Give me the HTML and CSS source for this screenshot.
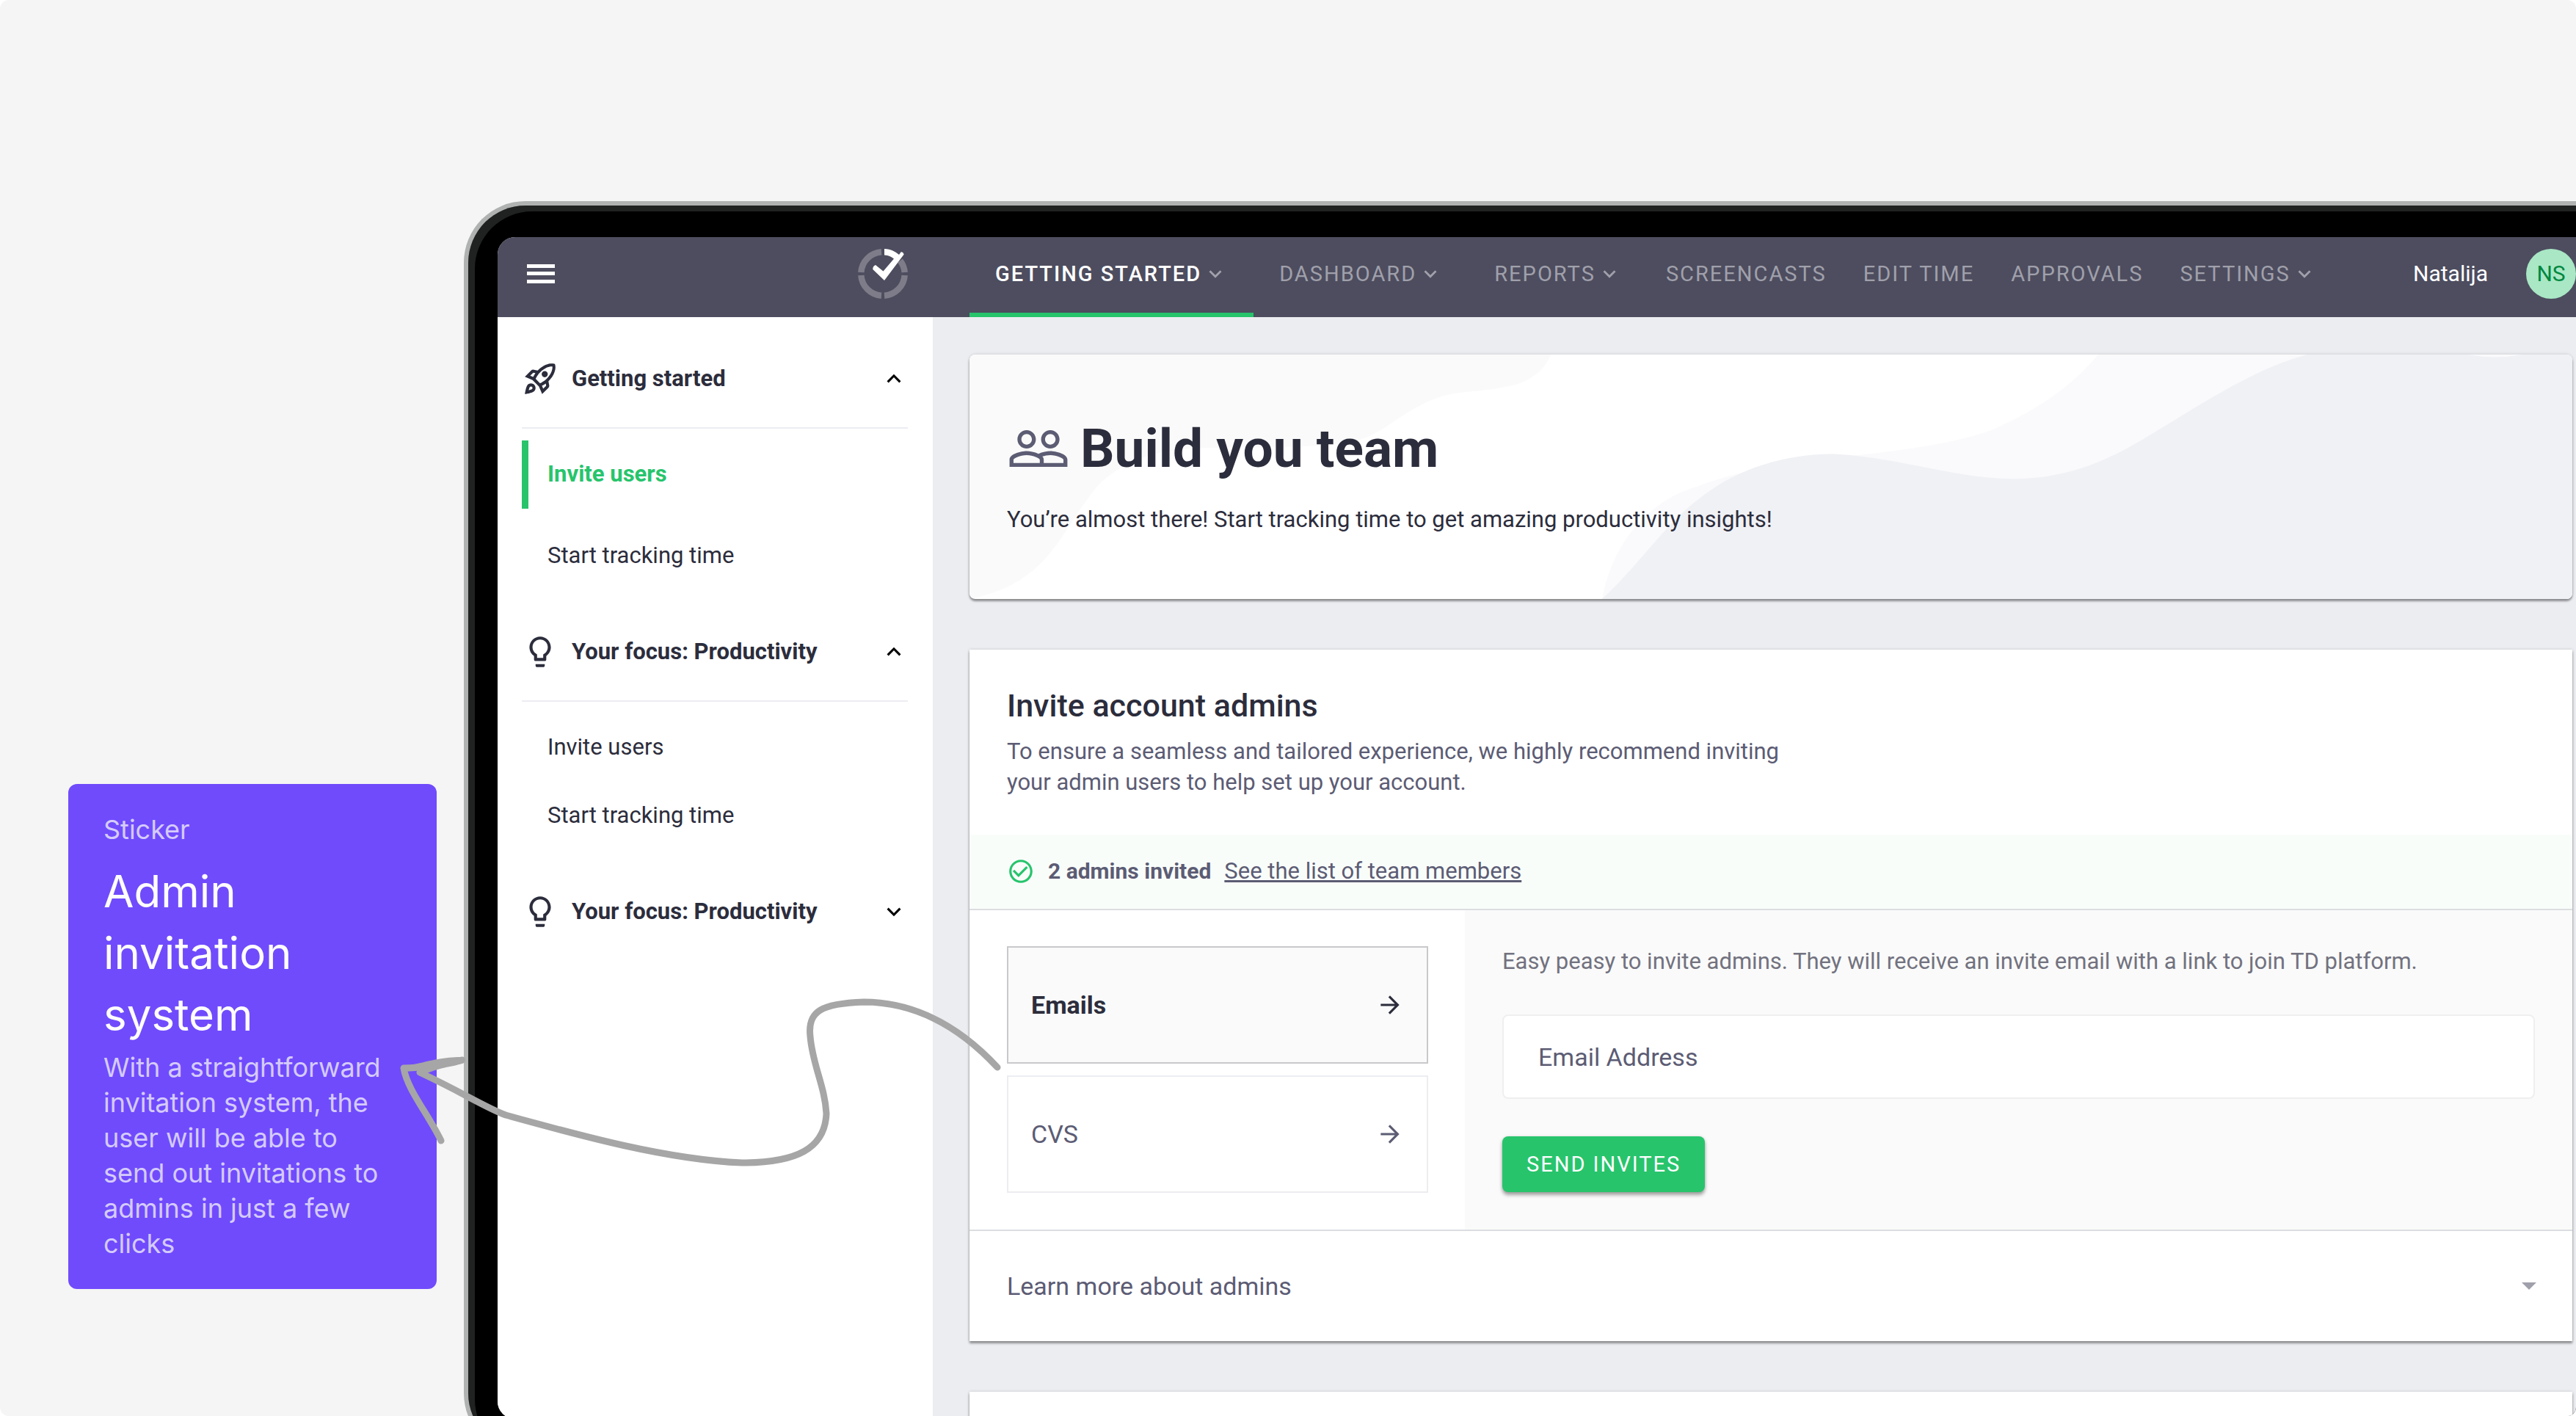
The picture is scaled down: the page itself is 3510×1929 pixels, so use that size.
FILE: index.html
```html
<!DOCTYPE html>
<html lang="en">
<head>
<meta charset="utf-8">
<title>Admin invitation system</title>
<link rel="stylesheet" href="styles.css">
</head>
<body>
<svg class="defs" width="0" height="0" aria-hidden="true">
  <symbol id="i-down" viewBox="0 0 24 24"><path d="M16.6 8.6 12 13.2 7.4 8.6 6 10l6 6 6-6z"/></symbol>
  <symbol id="i-up" viewBox="0 0 24 24"><path d="M12 8l-6 6 1.4 1.4 4.6-4.6 4.6 4.6L18 14z"/></symbol>
  <symbol id="i-arrow" viewBox="0 0 24 24"><path d="M12 4l-1.4 1.4 5.6 5.6H4v2h12.200l-5.600 5.600L12 20l8-8z"/></symbol>
  <symbol id="i-bulb" viewBox="0 0 24 24"><path d="M9 21c0 .5.4 1 1 1h4c.6 0 1-.5 1-1v-1H9v1zm3-19C8.100 2 5 5.100 5 9c0 2.400 1.200 4.500 3 5.700V17c0 .5.400 1 1 1h6c.6 0 1-.5 1-1v-2.300c1.800-1.300 3-3.400 3-5.700 0-3.900-3.100-7-7-7zm2.900 11.100l-.9.600V16h-4v-2.300l-.8-.6C7.800 12.200 7 10.600 7 9c0-2.800 2.200-5 5-5s5 2.200 5 5c0 1.600-.8 3.200-2.100 4.100z"/></symbol>
</svg>
<main class="scene">
  <aside class="sticker">
    <p class="sticker-label">Sticker</p>
    <h2 class="sticker-title">Admin invitation system</h2>
    <p class="sticker-text">With a straightforward invitation system, the user will be able to send out invitations to admins in just a few clicks</p>
  </aside>

  <div class="device">
    <div class="screen">
      <header class="topbar">
        <div class="brand">
          <button class="icon-button" type="button" aria-label="Menu">
            <svg class="burger" viewBox="0 0 38 26"><path d="M0 0h38v5H0zM0 10h38v5H0zM0 21h38v5H0z"/></svg>
          </button>
          <svg class="logo" viewBox="0 0 68 68">
            <g fill="none" stroke="#7d7c88" stroke-width="8.500">
              <path d="M4.300 32A29.750 29.750 0 0 1 32 4.300"/>
              <path d="M4.300 36A29.750 29.750 0 0 0 32 63.700"/>
              <path d="M63.700 36A29.750 29.750 0 0 1 36 63.700"/>
              <path d="M63.700 32A29.750 29.750 0 0 0 57.500 16.200"/>
            </g>
            <path fill="#fff" d="M36 0C45 .6 51 3.500 56 8L58.500 4.500Q61 3.500 62.700 7.500L36 43 20.300 28Q20 23.500 24 22L34.500 30.500 49 13.500C45 10.500 42 9 36 8.500z"/>
          </svg>
        </div>
        <nav class="tabs">
          <a class="tab tab-wide tab-active" href="#">GETTING STARTED<svg><use href="#i-down"/></svg></a>
          <a class="tab tab-wide" href="#">DASHBOARD<svg><use href="#i-down"/></svg></a>
          <a class="tab tab-wide" href="#">REPORTS<svg><use href="#i-down"/></svg></a>
          <a class="tab" href="#">SCREENCASTS</a>
          <a class="tab" href="#">EDIT TIME</a>
          <a class="tab" href="#">APPROVALS</a>
          <a class="tab" href="#">SETTINGS<svg><use href="#i-down"/></svg></a>
        </nav>
        <div class="account"><span>Natalija</span><span class="avatar">NS</span></div>
      </header>

      <div class="columns">
        <nav class="sidebar">
          <section class="group">
            <button class="group-head" type="button">
              <svg class="group-icon" viewBox="0 0 24 24"><path d="M6 15c-.83 0-1.580.340-2.120.880C2.700 17.060 2 22 2 22s4.940-.7 6.120-1.880C8.660 19.580 9 18.830 9 18c0-1.660-1.340-3-3-3zm.71 3.710c-.28.280-2.170.760-2.170.760s.470-1.880.760-2.170c.170-.19.420-.3.700-.3.550 0 1 .450 1 1 0 .280-.110.530-.290.710zm10.710-5.060c6.360-6.360 4.240-11.310 4.240-11.310S16.710.220 10.350 6.580l-2.490-.5c-.650-.130-1.330.080-1.810.550L2 10.690l5 2.140L11.170 17l2.140 5 4.050-4.050c.470-.470.680-1.150.550-1.810l-.49-2.490zM7.410 10.830l-1.910-.82 1.970-1.970 1.440.290c-.570.830-1.080 1.700-1.500 2.500zm6.580 7.670l-.82-1.910c.8-.42 1.670-.93 2.490-1.500l.290 1.440-1.960 1.970zM16 12.240c-1.320 1.320-3.380 2.400-4.040 2.730l-2.930-2.930c.320-.650 1.400-2.710 2.730-4.040 4.680-4.680 8.230-3.990 8.230-3.990s.690 3.550-3.990 8.230zM15 11c1.100 0 2-.9 2-2s-.9-2-2-2-2 .9-2 2 .9 2 2 2z"/></svg>
              <span>Getting started</span><svg class="group-toggle"><use href="#i-up"/></svg>
            </button>
            <div class="links links-spaced">
              <a class="link link-active" href="#">Invite users</a>
              <a class="link" href="#">Start tracking time</a>
            </div>
          </section>
          <section class="group">
            <button class="group-head" type="button">
              <svg class="group-icon"><use href="#i-bulb"/></svg>
              <span>Your focus: Productivity</span><svg class="group-toggle"><use href="#i-up"/></svg>
            </button>
            <div class="links">
              <a class="link" href="#">Invite users</a>
              <a class="link" href="#">Start tracking time</a>
            </div>
          </section>
          <section class="group">
            <button class="group-head group-closed" type="button">
              <svg class="group-icon"><use href="#i-bulb"/></svg>
              <span>Your focus: Productivity</span><svg class="group-toggle"><use href="#i-down"/></svg>
            </button>
          </section>
        </nav>

        <div class="content">
          <section class="card hero">
            <svg class="waves" viewBox="0 0 2184 334" preserveAspectRatio="none" aria-hidden="true">
              <path fill="#fafafa" d="M0 0H792C785 20 765 37 736 43C700 51 665 50 644 57C592 74 565 108 530 117C490 129 380 125 315 128C245 130 200 150 170 185C125 240 110 310 5 333L0 334z"/>
              <path fill="#fafafc" d="M862 334C875 260 925 200 989 181C1060 155 1130 143 1205 138C1280 130 1350 120 1398 101C1460 73 1505 40 1538 0H2184V334z"/>
              <path fill="#f0f1f5" d="M862 334C920 280 950 225 1012 184C1050 158 1110 135 1179 136C1270 141 1340 169 1424 170C1530 168 1590 120 1656 81C1720 42 1770 14 1823 0H2042Q2079 7 2116 0H2184V334z"/>
            </svg>
            <h1 class="hero-title">
              <svg viewBox="0 0 24 24"><path d="M16.500 13c-1.200 0-3.070.340-4.500 1-1.430-.67-3.300-1-4.500-1C5.330 13 1 14.080 1 16.250V19h22v-2.750c0-2.170-4.330-3.250-6.500-3.250zm-4 4.500h-10v-1.250c0-.54 2.560-1.750 5-1.750s5 1.210 5 1.750v1.250zm9 0H14v-1.250c0-.46-.2-.86-.52-1.220.880-.3 1.960-.53 3.020-.53 2.440 0 5 1.210 5 1.750v1.250zM7.500 12c1.930 0 3.500-1.570 3.500-3.500S9.430 5 7.500 5 4 6.570 4 8.500 5.570 12 7.500 12zm0-5.500c1.100 0 2 .9 2 2s-.9 2-2 2-2-.9-2-2 .9-2 2-2zm9 5.500c1.930 0 3.500-1.570 3.500-3.500S18.430 5 16.500 5 13 6.570 13 8.500s1.570 3.500 3.500 3.500zm0-5.500c1.100 0 2 .9 2 2s-.9 2-2 2-2-.9-2-2 .9-2 2-2z"/></svg>
              Build you team
            </h1>
            <p class="hero-text">You’re almost there! Start tracking time to get amazing productivity insights!</p>
          </section>

          <section class="card">
            <div class="card-head">
              <h2 class="card-title">Invite account admins</h2>
              <p class="card-text">To ensure a seamless and tailored experience, we highly recommend inviting your admin users to help set up your account.</p>
            </div>
            <div class="status">
              <svg viewBox="0 0 24 24"><path d="M16.590 7.580L10 14.170l-3.590-3.580L5 12l5 5 8-8zM12 2C6.480 2 2 6.480 2 12s4.480 10 10 10 10-4.480 10-10S17.520 2 12 2zm0 18c-4.420 0-8-3.580-8-8s3.580-8 8-8 8 3.580 8 8-3.580 8-8 8z"/></svg>
              <strong class="status-count">2 admins invited</strong>
              <a class="status-link" href="#">See the list of team members</a>
            </div>
            <div class="invite">
              <div class="methods">
                <button class="method method-active" type="button"><span>Emails</span><svg><use href="#i-arrow"/></svg></button>
                <button class="method" type="button"><span>CVS</span><svg><use href="#i-arrow"/></svg></button>
              </div>
              <form class="form">
                <label class="form-hint" for="email">Easy peasy to invite admins. They will receive an invite email with a link to join TD platform.</label>
                <input class="field" id="email" type="email" placeholder="Email Address">
                <button class="send" type="button">SEND INVITES</button>
              </form>
            </div>
            <button class="more" type="button"><span>Learn more about admins</span><svg viewBox="0 0 20 10"><path d="M0 0h20L10 10z"/></svg></button>
          </section>

          <section class="card card-next"></section>
        </div>
      </div>
    </div>
  </div>

  <svg class="pointer" viewBox="0 0 830 240" aria-hidden="true">
    <g fill="none" stroke="#a6a6a6" stroke-width="9" stroke-linecap="round" stroke-linejoin="round">
      <path d="M819 104C755 35 690 15 637 15C580 17 560 27 564 62C567 100 584 130 586 167C584 215 545 234 471 234C370 230 250 197 149 169C120 158 90 138 32 111"/>
      <path d="M61 204C45 170 15 135 10 105Q40 105 90 94"/>
    </g>
    <path fill="#a6a6a6" d="M20 101C50 94 65 90 88 90Q95 91 94 96C90 102 60 103 40 113L28 108z"/>
  </svg>
</main>
</body>
</html>
```
FILE: styles.css
```css
* { box-sizing: border-box; }

html, body { height: 100%; }

body {
  margin: 0;
  overflow: hidden;
  background: #fff;
  color: #2c2d3c;
  font-family: Roboto, "Liberation Sans", sans-serif;
  font-size: 31px;
  line-height: 42px;
}

h1, h2, p { margin: 0; }

a { color: inherit; text-decoration: none; }

button {
  margin: 0;
  padding: 0;
  border: 0;
  background: none;
  color: inherit;
  font: inherit;
  text-align: left;
}

svg { flex: none; fill: currentColor; }

.defs { position: absolute; }

.scene {
  position: relative;
  display: flex;
  align-items: flex-start;
  gap: 37px;
  height: 100%;
  padding-left: 93px;
  overflow: hidden;
  background: #f5f5f5;
  border-radius: 12px;
}

/* Sticker */

.sticker {
  flex: none;
  width: 502px;
  margin-top: 1068px;
  padding: 38px 48px;
  border-radius: 12px;
  background: #704bfc;
  color: #d5cbfc;
  font-family: Inter, "Liberation Sans", sans-serif;
  font-size: 36px;
  line-height: 48px;
}

.sticker-title {
  margin: 18px 0 6px;
  color: #fdfdfd;
  font-size: 60px;
  font-weight: 400;
  line-height: 84px;
}

.pointer {
  position: absolute;
  top: 1350px;
  left: 540px;
  width: 830px;
  height: 240px;
}

/* Device */

.device {
  flex: 1;
  min-width: 0;
  margin-top: 274px;
  padding: 43px 0 43px 40px;
  border: 6px solid #b0b2b2;
  border-right: 0;
  border-radius: 84px 0 0 84px;
  background: #000;
  box-shadow: inset 9px 8px 0 #202121;
}

.screen {
  overflow: hidden;
  border-radius: 24px 0 0 24px;
  background: #ecedf1;
}

/* Top bar */

.topbar {
  display: flex;
  background: #4d4d5f;
}

.brand {
  display: flex;
  flex: none;
  align-items: center;
  justify-content: space-between;
  width: 593px;
  padding: 0 34px 9px 40px;
  color: #fff;
}

.icon-button { display: flex; }

.burger { width: 38px; height: 26px; }

.logo { width: 68px; height: 68px; }

.tabs {
  display: flex;
  flex: 1;
  padding-left: 50px;
}

.tab {
  display: flex;
  align-items: center;
  gap: 2px;
  height: 109px;
  padding: 0 25px 3px;
  border-bottom: 6px solid transparent;
  color: #a0a0ab;
  font-size: 29px;
  letter-spacing: 2px;
  white-space: nowrap;
}

.tab-wide { padding: 0 35px 3px; }

.tab-active {
  border-color: #27c46c;
  color: #fff;
  font-weight: 500;
}

.tab svg { width: 34px; height: 34px; color: #a0a0ab; }

.account {
  display: flex;
  align-items: center;
  gap: 52px;
  padding-bottom: 9px;
  color: #fff;
  font-size: 30px;
}

.avatar {
  width: 68px;
  border-radius: 50%;
  background: #a9e7c5;
  color: #00873f;
  line-height: 68px;
  text-align: center;
}

/* Sidebar */

.columns { display: flex; }

.sidebar {
  flex: none;
  width: 593px;
  padding: 18px 34px 0 33px;
  background: #fff;
}

.group { margin-bottom: 18px; }

.group-head {
  display: flex;
  align-items: center;
  gap: 18px;
  width: 100%;
  height: 134px;
  border-bottom: 2px solid #ecedf1;
  font-weight: 700;
}

.group-closed { border-color: transparent; }

.group-head span { flex: 1; }

.group-icon { width: 50px; height: 50px; }

.group-toggle { width: 38px; height: 38px; color: #000; }

.links {
  display: flex;
  flex-direction: column;
  padding-top: 16px;
}

.links-spaced { gap: 18px; }

.link {
  padding: 25px 26px 26px;
  border-left: 9px solid transparent;
}

.link-active {
  border-color: #27c46c;
  color: #27c46c;
  font-weight: 700;
}

/* Content */

.content {
  display: flex;
  flex: 1;
  flex-direction: column;
  gap: 69px;
  min-width: 0;
  padding: 51px 5px 0 50px;
}

.card {
  background: #fff;
  box-shadow: 0 3px 3px rgba(0, 0, 0, 0.38), 0 0 4px rgba(0, 0, 0, 0.16);
}

.card-next { min-height: 37px; }

.hero {
  position: relative;
  padding: 85px 51px 87px;
  border-radius: 8px;
}

.waves {
  position: absolute;
  inset: 0;
  width: 100%;
  height: 100%;
  border-radius: 8px;
}

.hero-title {
  position: relative;
  display: flex;
  align-items: center;
  gap: 14px;
  font-size: 73px;
  font-weight: 700;
  line-height: 86px;
}

.hero-title svg { width: 86px; height: 86px; color: #5c5c74; }

.hero-text { position: relative; margin-top: 33px; }

.card-head { padding: 51px 51px 50px; }

.card-title {
  font-size: 43px;
  font-weight: 500;
  line-height: 50px;
}

.card-text {
  max-width: 1080px;
  margin-top: 17px;
  color: #5c5c74;
}

.status {
  display: flex;
  align-items: center;
  gap: 18px;
  padding: 29px 51px 30px;
  border-bottom: 2px solid #dcdde1;
  background: #f9fdfa;
  color: #5c5c74;
}

.status svg { width: 38px; height: 38px; color: #27c46c; }

.status-count { font-size: 30px; }

.status-link { text-decoration: underline; }

.invite {
  display: flex;
  border-bottom: 2px solid #dcdde1;
}

.methods {
  display: flex;
  flex: none;
  flex-direction: column;
  gap: 16px;
  width: 675px;
  padding: 49px 50px 0 51px;
}

.method {
  display: flex;
  align-items: center;
  justify-content: space-between;
  height: 160px;
  padding: 0 31px;
  border: 2px solid #ecedf1;
  color: #5c5c74;
  font-size: 34px;
}

.method-active {
  border-color: #c9c9cb;
  background: #fafafa;
  color: #2c2d3c;
  font-weight: 700;
}

.method svg { width: 38px; height: 38px; }

.form {
  display: flex;
  flex: 1;
  flex-direction: column;
  align-items: flex-start;
  gap: 51px;
  padding: 49px 51px 51px;
  background: #fafafa;
}

.form-hint { color: #72727f; }

.field {
  width: 100%;
  height: 115px;
  padding: 0 47px;
  border: 2px solid #efeff0;
  border-radius: 8px;
  background: #fff;
  font: inherit;
  font-size: 34px;
}

.field::placeholder { color: #5c5c74; opacity: 1; }

.send {
  height: 76px;
  padding: 0 33px;
  border-radius: 8px;
  background: #27c46c;
  box-shadow: 0 4px 5px rgba(0, 0, 0, 0.35), 0 0 4px rgba(0, 0, 0, 0.1);
  color: #fff;
  font-size: 29px;
  letter-spacing: 2px;
}

.more {
  display: flex;
  align-items: center;
  justify-content: space-between;
  width: 100%;
  height: 150px;
  padding: 0 49px 0 51px;
  color: #5c5c74;
  font-size: 34px;
}

.more svg { width: 20px; height: 10px; color: #a0a0ab; }
```
